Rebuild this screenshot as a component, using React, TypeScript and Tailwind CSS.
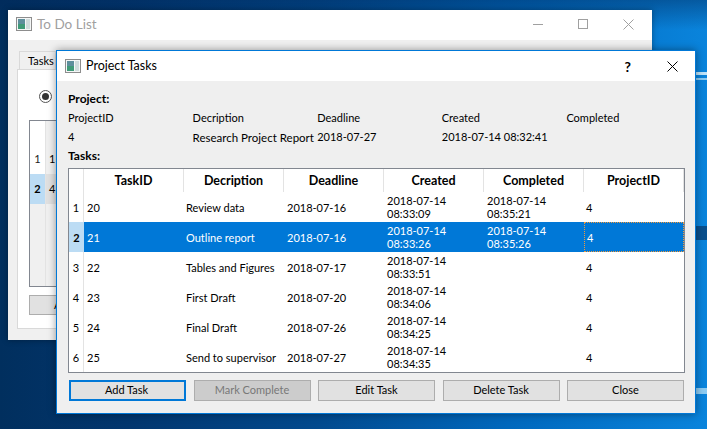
import React from "react";

const font = { fontFamily: 'Lato, "Noto Sans", sans-serif' };

const rows = [
  ["1", "20", "Review data", "2018-07-16", "2018-07-14\n08:33:09", "2018-07-14\n08:35:21", "4"],
  ["2", "21", "Outline report", "2018-07-16", "2018-07-14\n08:33:26", "2018-07-14\n08:35:26", "4"],
  ["3", "22", "Tables and Figures", "2018-07-17", "2018-07-14\n08:33:51", "", "4"],
  ["4", "23", "First Draft", "2018-07-20", "2018-07-14\n08:34:06", "", "4"],
  ["5", "24", "Final Draft", "2018-07-26", "2018-07-14\n08:34:25", "", "4"],
  ["6", "25", "Send to supervisor", "2018-07-27", "2018-07-14\n08:34:35", "", "4"],
];

const headers = ["TaskID", "Decription", "Deadline", "Created", "Completed", "ProjectID"];

function AppIcon() {
  return (
    <svg width="16" height="14" viewBox="0 0 16 14" className="shrink-0">
      <rect x="0.5" y="0.5" width="15" height="13" fill="#f4f6f6" stroke="#8d8d8d" />
      <rect x="2" y="2" width="7" height="5" fill="#5d8f9c" />
      <rect x="2" y="7" width="7" height="5" fill="#3f9a78" />
      <rect x="10" y="2" width="4" height="10" fill="#cfdcdc" />
    </svg>
  );
}

function CloseIcon({ color }: { color: string }) {
  return (
    <svg width="11" height="11" viewBox="0 0 11 11">
      <path d="M0.5 0.5L10.5 10.5M10.5 0.5L0.5 10.5" stroke={color} strokeWidth="1" fill="none" />
    </svg>
  );
}

function Button({ label, focused, disabled }: { label: string; focused?: boolean; disabled?: boolean }) {
  return (
    <div
      className={
        "h-[21px] w-[117px] flex items-center justify-center text-[11px] " +
        (focused
          ? "border-2 border-[#0078d7] bg-[#e1e1e1] text-black pr-[2px]"
          : disabled
            ? "border border-[#adadad] bg-[#cccccc] text-[#787878]"
            : "border border-[#adadad] bg-[#e1e1e1] text-black")
      }
    >
      {label}
    </div>
  );
}

function BackWindow() {
  return (
    <div className="absolute left-[8px] top-[10px] w-[644px] h-[330px] bg-[#f0f0f0] flex flex-col shadow-[0_0_6px_rgba(0,0,0,0.35)]">
      <div className="h-[30px] bg-white flex items-center pl-[8px] pb-[2px] shrink-0">
        <AppIcon />
        <span className="ml-[5px] text-[13.5px] text-[#a0a0a0]">To Do List</span>
        <div className="ml-auto flex items-center">
          <div className="w-[10px] h-px bg-[#a0a0a0] mr-[35px]" />
          <div className="w-[10px] h-[10px] border border-[#a0a0a0] mr-[35px]" />
          <div className="mr-[18px] flex">
            <CloseIcon color="#a0a0a0" />
          </div>
        </div>
      </div>
      <div className="flex-1 pl-[9px] pt-[11px] pr-[10px] pb-[11px] flex flex-col">
        <div className="flex pl-[2px] h-[18px]">
          <div className="w-[37px] border border-b-0 border-[#d9d9d9] bg-[#f0f0f0] text-[11px] pl-[8px] pt-px text-black">Tasks</div>
        </div>
        <div className="flex-1 border border-[#d9d9d9] bg-white pl-[11px] pt-[20px] pr-[10px] flex flex-col">
          <div className="ml-[10px] w-[13px] h-[13px] rounded-full border border-[#555] flex items-center justify-center">
            <div className="w-[7px] h-[7px] rounded-full bg-[#333]" />
          </div>
          <div className="mt-[17px] h-[167px] border border-[#828790] flex bg-[#f0f0f0]">
            <div className="w-[15px] flex flex-col text-[11px] text-center">
              <div className="h-[23px] bg-white" />
              <div className="h-[30px] bg-white flex items-center justify-center text-[#222]">1</div>
              <div className="h-[30px] bg-[#bcdcf4] flex items-center justify-center font-bold">2</div>
            </div>
            <div className="w-[12px] flex flex-col text-[11px] pl-[3px] border-l border-[#e3e3e3]">
              <div className="h-[23px]" />
              <div className="h-[30px] flex items-center">1</div>
              <div className="h-[30px] flex items-center bg-[#e0e0e0] -ml-[3px] pl-[3px]">4</div>
            </div>
          </div>
          <div className="mt-[8px] h-[20px] border border-[#adadad] bg-[#e1e1e1] text-[11px] flex items-center pl-[24px]">A</div>
        </div>
      </div>
    </div>
  );
}

function TaskTable() {
  return (
    <div className="h-[205px] border border-[#828790] bg-white flex flex-col">
      <div className="flex h-[23px] shrink-0">
        <div className="w-[15px] border-r border-[#e3e3e3] shrink-0" />
        {headers.map((h) => (
          <div key={h} className="w-[100px] border-r border-[#e3e3e3] flex items-center justify-center pt-[2px] text-[12.5px] font-bold text-black">
            {h}
          </div>
        ))}
      </div>
      {rows.map((r, i) => {
        const selected = i === 1;
        return (
          <div key={r[0]} className="flex h-[30px] shrink-0 text-[11px] leading-[13px]">
            <div className={"w-[15px] shrink-0 flex items-center justify-center border-r border-[#e3e3e3] " + (selected ? "bg-[#bcdcf4] font-bold border-r-0" : "")}>
              {r[0]}
            </div>
            {r.slice(1).map((c, j) => (
              <div
                key={j}
                className={
                  "w-[100px] shrink-0 flex items-center whitespace-pre " +
                  (j === 1 || j === 5 ? "pl-[2px] " : "pl-[3px] ") +
                  (selected ? "bg-[#0078d7] text-white " : "text-black ") +
                  (selected && j === 5 ? "border border-dotted border-[#f09a3c] pl-[1px]" : "")
                }
              >
                {c}
              </div>
            ))}
          </div>
        );
      })}
    </div>
  );
}

function ProjectWindow() {
  return (
    <div className="absolute left-[56px] top-[50px] w-[640px] h-[364px] border border-[#0078d7] bg-[#efefef] flex flex-col shadow-[0_0_8px_rgba(0,0,0,0.4)]">
      <div className="h-[30px] bg-white flex items-center pl-[8px] shrink-0">
        <AppIcon />
        <span className="ml-[5px] text-[12.5px] text-black">Project Tasks</span>
        <span className="ml-auto mr-[36px] text-[14px] font-bold text-black">?</span>
        <div className="mr-[17px] flex">
          <CloseIcon color="#000000" />
        </div>
      </div>
      <div className="flex-1 pl-[11px] pr-[10px] pt-[9px] flex flex-col text-[11px] text-black">
        <div className="h-[18px] flex items-center font-bold text-[12px]">Project:</div>
        <div className="grid grid-cols-[124.6px_124.6px_124.6px_124.6px_1fr] mt-[1px] h-[19px] items-center">
          <span>ProjectID</span>
          <span>Decription</span>
          <span>Deadline</span>
          <span>Created</span>
          <span>Completed</span>
        </div>
        <div className="grid grid-cols-[124.6px_124.6px_124.6px_1fr] h-[19px] items-center whitespace-nowrap">
          <span>4</span>
          <span className="text-[11.5px]">Research Project Report</span>
          <span>2018-07-27</span>
          <span>2018-07-14 08:32:41</span>
        </div>
        <div className="h-[18px] flex items-center font-bold text-[12px]">Tasks:</div>
        <div className="mt-[3px]">
          <TaskTable />
        </div>
        <div className="mt-[7px] ml-[1px] flex justify-between pr-[1px]">
          <Button label="Add Task" focused />
          <Button label="Mark Complete" disabled />
          <Button label="Edit Task" />
          <Button label="Delete Task" />
          <Button label="Close" />
        </div>
      </div>
    </div>
  );
}

export default function App() {
  return (
    <div
      style={font}
      className="relative w-[707px] h-[429px] overflow-hidden bg-[linear-gradient(180deg,rgba(0,40,90,0.45)_0px,rgba(0,40,90,0)_30px),linear-gradient(90deg,#012f5e_0%,#02366e_18%,#024a8e_45%,#0068bd_72%,#0a84dc_100%)]"
    >
      {/* streaks of the wallpaper to the right of the windows */}
      <div className="absolute left-[696px] top-[72px] w-[11px] h-[3px] bg-[#bfe3f8]" />
      <div className="absolute left-[696px] top-[78px] w-[11px] h-[2px] bg-[#8ccbf2]" />
      <div className="absolute left-[696px] top-[226px] w-[11px] h-[14px] bg-[#0a4f8c]" />
      <div className="absolute left-[696px] top-[388px] w-[11px] h-[6px] bg-[#8ccbf2]" />
      <BackWindow />
      <ProjectWindow />
    </div>
  );
}
